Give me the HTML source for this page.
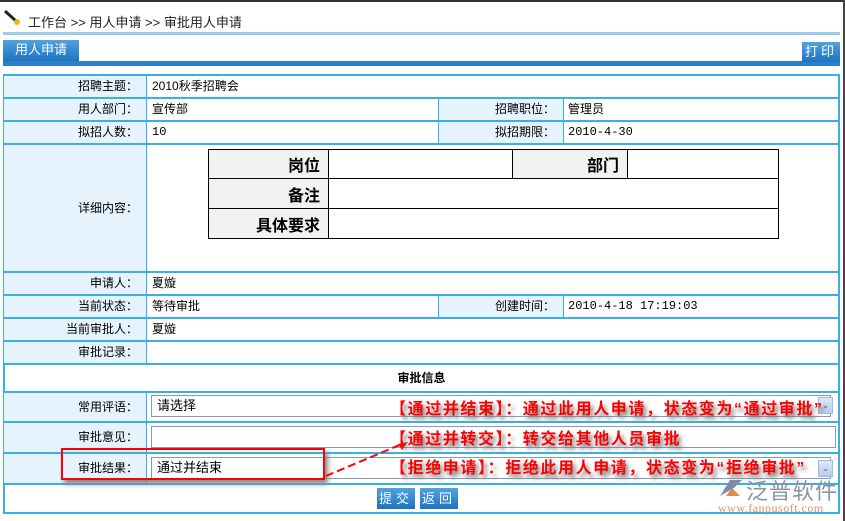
<!DOCTYPE html>
<html><head><meta charset="utf-8"><style>
*{margin:0;padding:0;box-sizing:border-box}
body{width:845px;height:521px;background:#fff;position:relative;overflow:hidden;font-family:"Liberation Sans","Noto Sans CJK SC",sans-serif;font-size:12px;color:#000}
.a{position:absolute}
.lb{position:absolute;background:#e6f3fd;text-align:right;padding-right:8px;border-right:1px solid #39b0e5;left:4px;width:143px}
.v{position:absolute;padding-left:4px}
.hl{position:absolute;left:3px;width:837px;height:2px;background:#39b0e5}
.rl{position:absolute;background:#e6f3fd;text-align:right;padding-right:8px;border-left:1px solid #39b0e5;border-right:1px solid #39b0e5;left:438px;width:126px}
.red{color:#f00;font-weight:bold;font-size:16px;letter-spacing:1.6px;position:absolute;text-shadow:3px 4px 4px #777;white-space:nowrap}
.btn{position:absolute;background:linear-gradient(#4fa3e0,#1f72c0);color:#fff;font-size:13px;text-align:center;letter-spacing:4px;line-height:21px}
.inp{position:absolute;border:1px solid #7f9db9;background:#fff;font-size:13px;padding-left:5px;line-height:20px}
.dd{position:absolute;width:15px;height:17px;background:linear-gradient(#dce8fa,#b7cdf0);border:1px solid #a0b8e0;color:#4d6185;font-size:9px;text-align:center;line-height:15px}
td{border:1px solid #000}
</style></head><body>
<div class="a" style="left:0;top:0;width:845px;height:2px;background:#333"></div>
<div class="a" style="left:843px;top:0;width:2px;height:521px;background:#444"></div>
<svg class="a" style="left:4px;top:10px" width="18" height="16"><line x1="1" y1="1" x2="12" y2="11" stroke="#222" stroke-width="3"/><circle cx="13" cy="12" r="3" fill="#f0b020"/></svg>
<div class="a" style="left:28px;top:12px;font-size:13px;color:#222;white-space:nowrap">工作台 &gt;&gt; 用人申请 &gt;&gt; 审批用人申请</div>
<div class="a" style="left:3px;top:32px;width:837px;height:3px;background:#9ccbef"></div>
<div class="a" style="left:3px;top:40px;width:76px;height:21px;background:linear-gradient(#4fa3e0,#1f72c0);color:#fff;font-size:13px;text-align:center;line-height:20px">用人申请</div>
<div class="a" style="left:3px;top:61px;width:837px;height:5px;background:#2a7fc6"></div>
<div class="a" style="left:802px;top:42px;width:38px;height:20px;background:linear-gradient(#4fa3e0,#1f72c0);color:#fff;font-size:13px;text-align:center;line-height:20px;letter-spacing:3px">打印</div>

<div class="a" style="left:3px;top:74px;width:837px;height:440px;border:2px solid #39b0e5"></div>
<div class="lb" style="top:76px;height:21px;line-height:21px">招聘主题：</div>
<div class="lb" style="top:99px;height:21px;line-height:21px">用人部门：</div>
<div class="lb" style="top:122px;height:21px;line-height:21px">拟招人数：</div>
<div class="lb" style="top:145px;height:126px;line-height:126px">详细内容：</div>
<div class="lb" style="top:273px;height:21px;line-height:21px">申请人：</div>
<div class="lb" style="top:296px;height:21px;line-height:21px">当前状态：</div>
<div class="lb" style="top:319px;height:21px;line-height:21px">当前审批人：</div>
<div class="lb" style="top:342px;height:21px;line-height:21px">审批记录：</div>
<div class="lb" style="top:393px;height:28px;line-height:28px">常用评语：</div>
<div class="lb" style="top:423px;height:29px;line-height:29px">审批意见：</div>
<div class="lb" style="top:454px;height:29px;line-height:29px">审批结果：</div>
<div class="rl" style="top:99px;height:21px;line-height:21px">招聘职位：</div>
<div class="rl" style="top:122px;height:21px;line-height:21px">拟招期限：</div>
<div class="rl" style="top:296px;height:21px;line-height:21px">创建时间：</div>
<div class="hl" style="top:97px"></div><div class="hl" style="top:120px"></div><div class="hl" style="top:143px"></div><div class="hl" style="top:271px"></div><div class="hl" style="top:294px"></div><div class="hl" style="top:317px"></div><div class="hl" style="top:340px"></div><div class="hl" style="top:363px"></div><div class="hl" style="top:391px"></div><div class="hl" style="top:421px"></div><div class="hl" style="top:452px"></div><div class="hl" style="top:483px"></div>
<div class="v" style="left:148px;top:76px;line-height:21px">2010秋季招聘会</div>
<div class="v" style="left:148px;top:99px;line-height:21px">宣传部</div>
<div class="v" style="left:148px;top:122px;line-height:21px;font-family:'Liberation Mono',monospace">10</div>
<div class="v" style="left:564px;top:99px;line-height:21px">管理员</div>
<div class="v" style="left:564px;top:122px;line-height:21px;font-family:'Liberation Mono',monospace">2010-4-30</div>
<div class="v" style="left:148px;top:273px;line-height:21px">夏嫙</div>
<div class="v" style="left:148px;top:296px;line-height:21px">等待审批</div>
<div class="v" style="left:564px;top:296px;line-height:21px;font-family:'Liberation Mono',monospace">2010-4-18 17:19:03</div>
<div class="v" style="left:148px;top:319px;line-height:21px">夏嫙</div>
<div class="a" style="left:3px;top:365px;width:837px;text-align:center;line-height:26px;font-weight:bold">审批信息</div>
<table class="a" style="left:208px;top:149px;width:571px;height:90px;border-collapse:collapse;font-size:16px;font-weight:bold">
<tr style="height:29px"><td style="width:120px;background:#f2f2f2;text-align:right;padding-right:8px">岗位</td><td style="width:184px"></td><td style="width:115px;background:#f2f2f2;text-align:right;padding-right:8px">部门</td><td></td></tr>
<tr style="height:30px"><td style="background:#f2f2f2;text-align:right;padding-right:8px">备注</td><td colspan="3"></td></tr>
<tr style="height:30px"><td style="background:#f2f2f2;text-align:right;padding-right:8px">具体要求</td><td colspan="3"></td></tr>
</table>
<div class="inp" style="left:151px;top:395px;width:680px;height:22px">请选择</div>
<div class="dd" style="left:818px;top:397px">⌄</div>
<div class="inp" style="left:151px;top:426px;width:685px;height:22px"></div>
<div class="inp" style="left:151px;top:457px;width:680px;height:22px">通过并结束</div>
<div class="dd" style="left:818px;top:460px">⌄</div>
<div class="a" style="left:61px;top:448px;width:264px;height:32px;border:2px solid #f00;box-shadow:3px 4px 5px #888"></div>
<svg class="a" style="left:320px;top:440px" width="90" height="40"><line x1="6" y1="36" x2="82" y2="4" stroke="#f00" stroke-width="2" stroke-dasharray="8,4"/><polygon points="88,2 78,4 82,10" fill="#f00"/></svg>
<div class="red" style="left:390px;top:395px">【通过并结束】：通过此用人申请，状态变为“通过审批”</div>
<div class="red" style="left:390px;top:425px">【通过并转交】：转交给其他人员审批</div>
<div class="red" style="left:390px;top:454px">【拒绝申请】：拒绝此用人申请，状态变为“拒绝审批”</div>
<div class="btn" style="left:377px;top:488px;width:38px;height:21px">提交</div>
<div class="btn" style="left:420px;top:488px;width:38px;height:21px">返回</div>
<svg class="a" style="left:716px;top:476px" width="30" height="24"><path d="M4 20 L14 4 L26 4 L18 12 Z" fill="#7d8ca8"/><path d="M10 20 L16 12 L24 20 Z" fill="#e08a50"/></svg>
<div class="a" style="left:746px;top:474px;font-size:22px;color:#8a93a3;letter-spacing:1px;white-space:nowrap">泛普软件</div>
<div class="a" style="left:718px;top:501px;font-size:12px;color:#e09070;font-family:'Liberation Serif',serif;letter-spacing:0.5px">www.fanpusoft.com</div>
</body></html>
